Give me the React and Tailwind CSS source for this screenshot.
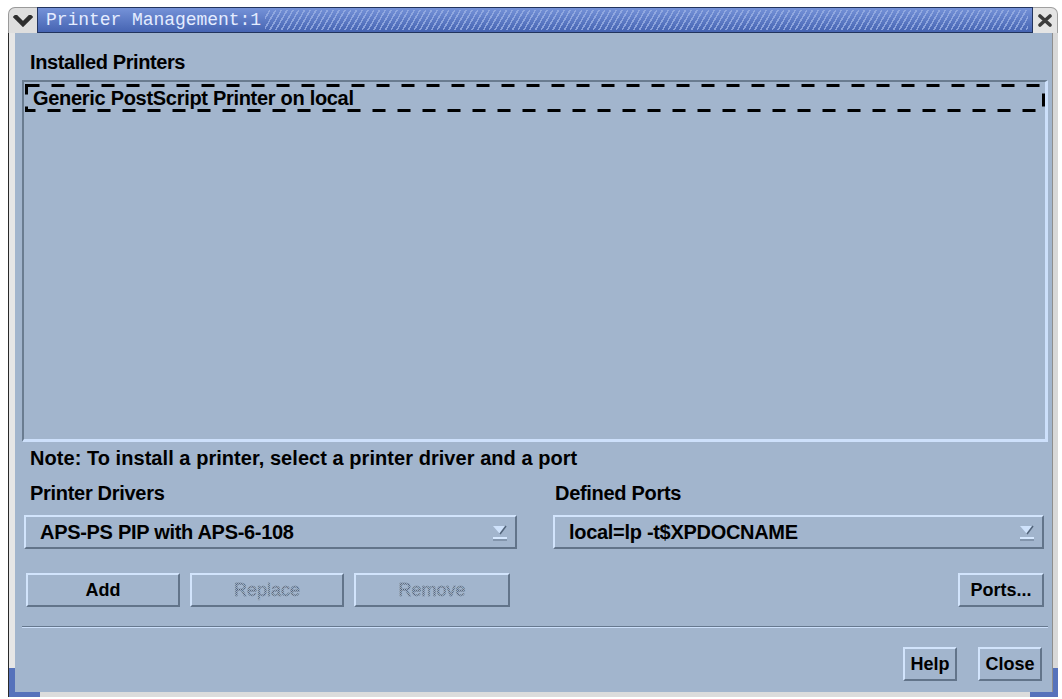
import { useState } from "react"

const RAISED =
  "border-2 border-t-[#d2e4fc] border-l-[#d2e4fc] border-b-[#62748a] border-r-[#62748a]"

function Chevron() {
  return (
    <svg width="20" height="12" viewBox="0 0 20 12">
      <polyline
        points="3,2 10,9 17,2"
        fill="none"
        stroke="#2e2e2e"
        strokeWidth="4.5"
        strokeLinecap="square"
      />
    </svg>
  )
}

function CloseGlyph() {
  return (
    <svg width="14" height="13" viewBox="0 0 14 13">
      <path d="M2 2 L12 11 M12 2 L2 11" stroke="#3c3c3c" strokeWidth="3.6" strokeLinecap="round" />
    </svg>
  )
}

function ComboArrow() {
  return (
    <svg width="15" height="17" viewBox="0 0 15 17">
      <polygon points="1,2 14,2 8,10" fill="#cfe2fb" />
      <polyline points="14,2 8,10" stroke="#52647a" strokeWidth="1.5" fill="none" />
      <line x1="1" y1="14" x2="15" y2="14" stroke="#d6e8ff" strokeWidth="2" />
      <line x1="1" y1="16" x2="15" y2="16" stroke="#62748a" strokeWidth="1" />
    </svg>
  )
}

function Combo({ value, width }) {
  return (
    <div className={`${RAISED} ${width} h-[34px] flex items-center justify-between pl-[14px] pr-[8px]`}>
      <span className="text-[20px] font-bold tracking-[-0.3px] leading-none">{value}</span>
      <ComboArrow />
    </div>
  )
}

function Button({ label, width, disabled }) {
  return (
    <button
      type="button"
      className={`${RAISED} ${width} h-[34px] flex items-center justify-center text-[18px] leading-none font-bold ${
        disabled ? "text-[#7a8a9e]" : "text-black"
      }`}
    >
      {disabled ? (
        // stippled label for insensitive buttons
        <span className="bg-[repeating-conic-gradient(#4e5e72_0_25%,transparent_0_50%)] bg-[length:2px_2px] bg-clip-text text-transparent font-normal [-webkit-text-stroke:0.4px_#8796aa]">
          {label}
        </span>
      ) : (
        label
      )}
    </button>
  )
}

export default function App() {
  const [printers] = useState(["Generic PostScript Printer on local"])

  return (
    <div className="w-[1062px] h-[699px] bg-white overflow-hidden font-['Liberation_Sans',Arial,sans-serif] text-black">
      <div className="pt-[7px] pl-[8px] w-[1058px]">
        {/* title bar */}
        <div className="flex h-[26px]">
          <div className="w-[29px] bg-[#dedede] rounded-tl-[7px] border-t border-l border-[#9a9a9a] flex items-center justify-center">
            <Chevron />
          </div>
          <div className="flex-1 flex items-center bg-linear-to-b from-[#7592d8] to-[#4664b2] border border-[#22345e]">
            <span className="pl-[8px] pr-[4px] font-['Liberation_Mono',monospace] text-[18px] leading-none text-[#e4ecff] tracking-[-0.05px]">
              Printer Management:1
            </span>
            <div className="flex-1 h-[20px] mr-[4px] bg-[repeating-linear-gradient(120deg,transparent_0px,transparent_3.5px,#9ab0e4_3.5px,#9ab0e4_5px)] opacity-80" />
          </div>
          <div className="w-[25px] bg-[#e4e4e4] rounded-tr-[7px] border-t border-r border-[#a0a0a0] flex items-center justify-center">
            <CloseGlyph />
          </div>
        </div>

        {/* frame + body */}
        <div className="flex h-[659px]">
          <div className="w-[7px] flex flex-col border-l border-[#2a2a2a]">
            <div className="flex-1 bg-[#e6e6e6]" />
            <div className="h-[24px] bg-[#5672bb]" />
          </div>

          <div className="flex-1 bg-[#a2b5cd] flex flex-col">
            <div className="mt-[11px] h-[36px] flex items-center pl-[15px] text-[20px] font-bold tracking-[-0.4px]">
              Installed Printers
            </div>

            <div className="ml-[7px] w-[1026px] h-[362px] border-t-2 border-l-2 border-b-[3px] border-r-[3px] border-t-[#6a7c90] border-l-[#6a7c90] border-b-[#cde0fb] border-r-[#cde0fb]">
              {printers.map((name) => (
                <div key={name} className="relative mt-[2px] ml-[1px] w-[1020px] h-[28px] flex items-center pl-[8px]">
                  <svg className="absolute inset-0" width="1020" height="28">
                    <rect
                      x="1.5"
                      y="1.5"
                      width="1017"
                      height="25"
                      fill="none"
                      stroke="#000"
                      strokeWidth="3"
                      strokeDasharray="13 12"
                    />
                  </svg>
                  <span className="text-[20px] font-bold tracking-[-0.3px] leading-none">{name}</span>
                </div>
              ))}
            </div>

            <div className="h-[32px] flex items-center pl-[15px] text-[20px] font-bold tracking-[0.05px]">
              Note: To install a printer, select a printer driver and a port
            </div>

            <div className="h-[37px] flex items-center text-[20px] font-bold tracking-[-0.3px]">
              <span className="pl-[15px] w-[540px]">Printer Drivers</span>
              <span>Defined Ports</span>
            </div>

            <div className="mt-[4px] flex gap-[36px] pl-[9px]">
              <Combo value="APS-PS PIP with APS-6-108" width="w-[493px]" />
              <Combo value="local=lp -t$XPDOCNAME" width="w-[491px]" />
            </div>

            <div className="mt-[24px] flex gap-[10px] pl-[11px] pr-[8px]">
              <Button label="Add" width="w-[154px]" />
              <Button label="Replace" width="w-[154px]" disabled />
              <Button label="Remove" width="w-[156px]" disabled />
              <div className="flex-1" />
              <Button label="Ports..." width="w-[86px]" />
            </div>

            <div className="mt-[19px] ml-[7px] w-[1026px] border-t border-b border-t-[#66788e] border-b-[#cde0fb]" />

            <div className="mt-[19px] flex justify-end gap-[21px] pr-[10px]">
              <Button label="Help" width="w-[54px]" />
              <Button label="Close" width="w-[64px]" />
            </div>
          </div>

          <div className="w-[6px] flex flex-col border-l border-[#8e8e8e]">
            <div className="flex-1 bg-[#d8d8d8]" />
            <div className="h-[24px] bg-[#5672bb]" />
          </div>
        </div>

        {/* bottom frame edge */}
        <div className="flex h-[5px] bg-[#dcdcdc]">
          <div className="w-[32px] bg-[#5672bb] border-l border-[#2a2a2a]" />
          <div className="flex-1" />
          <div className="w-[28px] bg-[#5672bb]" />
        </div>
      </div>
    </div>
  )
}
